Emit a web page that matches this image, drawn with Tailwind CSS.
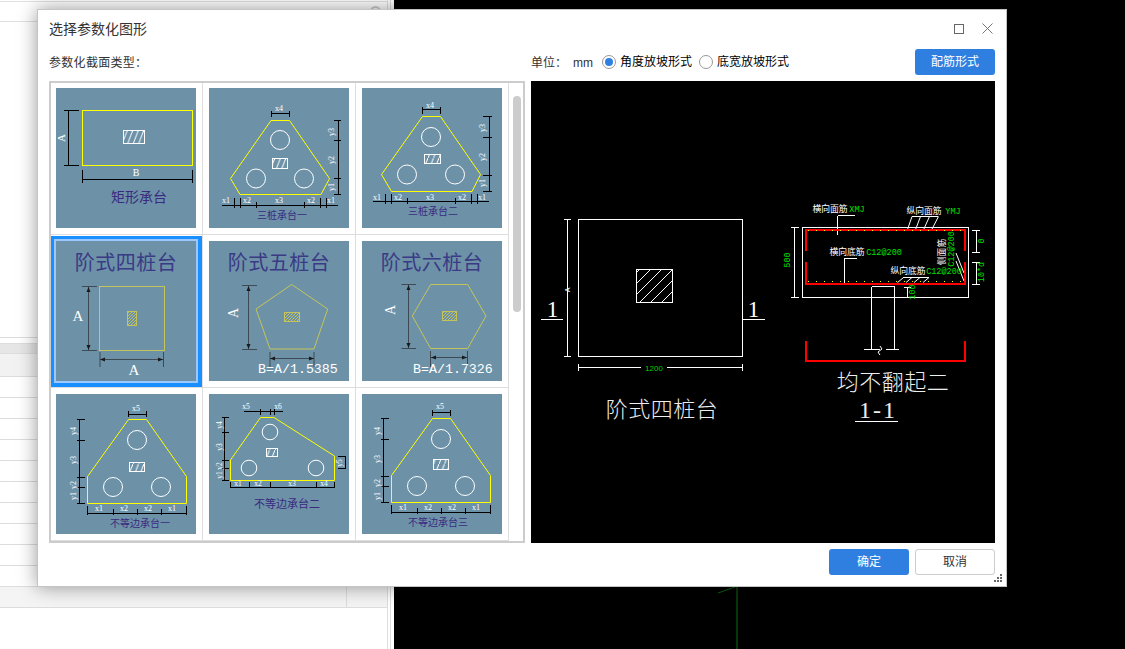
<!DOCTYPE html>
<html lang="zh">
<head>
  <meta charset="UTF-8"/>
  <title>选择参数化图形</title>
  <script src="https://cdn.jsdelivr.net/npm/@tailwindcss/browser@4"></script>
</head>
<body class="bg-black font-['Liberation_Sans','Noto_Sans_CJK_SC',sans-serif] text-[#333]">
<svg class="absolute w-0 h-0">
  <defs>
    <pattern id="hatch" width="5.5" height="14" patternUnits="userSpaceOnUse"><path d="M5.5 0L0 14" stroke="#fff" stroke-width="1"/></pattern>
    <pattern id="hatchSoft" width="3" height="3" patternUnits="userSpaceOnUse"><path d="M3 0L0 3" stroke="#c4c45a" stroke-width="0.9"/></pattern>
    <pattern id="hatchBig" width="11" height="11" patternUnits="userSpaceOnUse"><path d="M11 0L0 11" stroke="#fff" stroke-width="1"/></pattern>
  </defs>
</svg>

<div class="relative flex w-[1125px] h-[649px] overflow-hidden">
  <!-- 背景表格 -->
  <div class="w-[394px] h-full bg-white flex">
    <div class="w-[388px] border-r border-[#ddd] flex flex-col">
      <div class="h-[21px] mt-[1px] border-t border-b border-[#e0e0e0] flex justify-end items-center pr-[6px]"><div class="w-[11px] h-[11px] rounded-full border-2 border-[#ccc]"></div></div>
      <div class="h-[316px] border-b border-[#ddd]"></div>
      <div class="h-[5px]"></div>
      <div class="h-[11px] bg-[#e6e6e6] border-t border-[#ddd] border-b"></div>
      <div class="h-[23px] bg-[#f2f2f2] border-b border-[#ddd]"></div>
      <div class="h-[21px] border-b border-[#ddd]"></div>
      <div class="h-[21px] border-b border-[#ddd]"></div>
      <div class="h-[21px] border-b border-[#ddd]"></div>
      <div class="h-[21px] border-b border-[#ddd]"></div>
      <div class="h-[21px] border-b border-[#ddd]"></div>
      <div class="h-[21px] border-b border-[#ddd]"></div>
      <div class="h-[21px] border-b border-[#ddd]"></div>
      <div class="h-[21px] border-b border-[#ddd]"></div>
      <div class="h-[21px] border-b border-[#ddd]"></div>
      <div class="h-[21px] border-b border-[#ddd]"></div>
      <div class="h-[21px] border-b border-[#ddd] bg-[#f4f4f4] flex justify-end"><div class="w-[41px] border-l border-[#ddd]"></div></div>
    </div>
    <div class="w-[2px]"></div>
    <div class="w-[1px] bg-[#ddd]"></div>
  </div>
  <!-- 黑色绘图区 -->
  <div class="flex-1 bg-black relative">
    <svg class="absolute left-0 top-0" width="731" height="649" fill="none">
      <path d="M343 586V649" stroke="#0f6f0f"/>
      <path d="M324 593L341 587" stroke="#0f5f0f"/>
    </svg>
  </div>

  <!-- 对话框 -->
  <div class="absolute left-[37px] top-[9px] w-[970px] h-[578px] bg-white border border-[#c4c4c4] shadow-[0_0_18px_rgba(0,0,0,0.4)] px-[11px]">
    <div class="h-[39px] flex items-center justify-between">
      <div class="text-[14px] text-[#333] pb-[1px]">选择参数化图形</div>
      <div class="flex items-center gap-[18px] pr-[2px] pb-[2px]">
        <svg width="10" height="10" fill="none" stroke="#666"><rect x="0.5" y="0.5" width="9" height="9"/></svg>
        <svg width="11" height="11" fill="none" stroke="#777"><path d="M0.5 0.5L10.5 10.5M10.5 0.5L0.5 10.5"/></svg>
      </div>
    </div>

    <div class="h-[26px] flex items-center text-[12px]">
      <div class="w-[482px] tracking-[0.3px] pt-[2px]">参数化截面类型：</div>
      <div class="w-[42px] pt-[2px]">单位：</div>
      <div class="w-[29px] pt-[2px]">mm</div>
      <div class="w-[14px] h-[14px] rounded-full border border-[#999] flex items-center justify-center"><div class="w-[8px] h-[8px] rounded-full bg-[#2e7fe0]"></div></div>
      <div class="ml-[4px] w-[79px] text-black">角度放坡形式</div>
      <div class="w-[14px] h-[14px] rounded-full border border-[#999]"></div>
      <div class="ml-[4px] text-black">底宽放坡形式</div>
      <button class="ml-auto w-[80px] h-[26px] rounded-[3px] bg-[#2e7fe0] text-white text-[12px]">配筋形式</button>
    </div>

    <div class="flex mt-[6px]">
      <!-- 缩略图列表 -->
      <div class="relative w-[476px] h-[462px] border-2 border-[#ccc] overflow-hidden">
        <div class="grid grid-cols-[repeat(3,153px)] grid-rows-[repeat(3,153px)] ml-[-1px] mt-[-1px] w-[459px]">

          <div class="border-r border-b border-[#ddd] pl-[6px] pt-[6px]">
            <svg class="block bg-[#6d92a8]" width="140" height="140" fill="none" shape-rendering="crispEdges">
              <rect x="26.5" y="22.5" width="110" height="55" stroke="#ffff00"/>
              <rect x="67.5" y="42.5" width="21" height="13" fill="url(#hatch)" stroke="#fff"/>
              <g stroke="#000"><path d="M12.5 22.5V77.5M8 22.5H23M8 77.5H23M26.5 82V95M136.5 82V95M26.5 91.5H136.5"/></g>
              <g font-family="Liberation Serif" fill="#fff" text-anchor="middle" shape-rendering="auto">
                <text x="0" y="0" font-size="11" transform="translate(9 50) rotate(-90)">A</text>
                <text x="80" y="88" font-size="10">B</text>
              </g>
              <text x="83" y="114" font-size="14" fill="#3a2a80" text-anchor="middle">矩形承台</text>
            </svg>
          </div>

          <div class="border-r border-b border-[#ddd] pl-[6px] pt-[6px]">
            <svg class="block bg-[#6d92a8]" width="140" height="140" fill="none" shape-rendering="crispEdges">
              <path d="M62 32.5H80.5L120.5 90.5L112 106.5H31L21.5 90.5Z" stroke="#ffff00" shape-rendering="auto"/>
              <g stroke="#fff" shape-rendering="auto"><circle cx="71" cy="52" r="9.5"/><circle cx="47" cy="90.5" r="9.5"/><circle cx="95" cy="90.5" r="9.5"/></g>
              <rect x="63.5" y="70.5" width="15" height="10" fill="url(#hatch)" stroke="#fff"/>
              <path stroke="#000" d="M62.5 25.5H80.5M62.5 23V29M80.5 23V29M129.5 32.5V106.5M125 32.5H132M125 52.5H132M125 90.5H132M125 106.5H132M13 117.5H128.5M25.5 110V120M31.5 110V120M47.5 114V120M95.5 114V120M111.5 110V120M117.5 110V120"/>
              <g font-family="Liberation Serif" fill="#fff" font-size="8" text-anchor="middle" shape-rendering="auto">
                <text x="70" y="23">x4</text><text x="17" y="115">x1</text><text x="38" y="115">x2</text><text x="70" y="115">x3</text><text x="102" y="115">x2</text><text x="122" y="115">x1</text>
                <text transform="translate(125 44) rotate(-90)">y3</text><text transform="translate(125 72) rotate(-90)">y2</text><text transform="translate(125 99) rotate(-90)">y1</text>
              </g>
              <text x="73" y="131" font-size="10" fill="#3a2a80" text-anchor="middle">三桩承台一</text>
            </svg>
          </div>

          <div class="border-r border-b border-[#ddd] pl-[6px] pt-[6px]">
            <svg class="block bg-[#6d92a8]" width="140" height="140" fill="none" shape-rendering="crispEdges">
              <path d="M60.5 28.5H78.5L118.5 86.5L110 103.5H29.5L19.5 86.5Z" stroke="#ffff00" shape-rendering="auto"/>
              <g stroke="#fff" shape-rendering="auto"><circle cx="69" cy="49" r="9.5"/><circle cx="45" cy="86.5" r="9.5"/><circle cx="93" cy="86.5" r="9.5"/></g>
              <rect x="62.5" y="66.5" width="16" height="9" fill="url(#hatch)" stroke="#fff"/>
              <path stroke="#000" d="M60.5 21.5H78.5M60.5 19V26M78.5 19V26M127.5 28.5V103.5M121 28.5H130M121 49.5H130M121 87.5H130M121 103.5H130M11 113.5H126.5M23.5 106V116M29.5 106V116M45.5 110V116M93.5 110V116M109.5 106V116M115.5 106V116"/>
              <g font-family="Liberation Serif" fill="#fff" font-size="8" text-anchor="middle" shape-rendering="auto">
                <text x="68" y="20">x4</text><text x="15" y="112">x1</text><text x="36" y="112">x2</text><text x="68" y="112">x3</text><text x="100" y="112">x2</text><text x="120" y="112">x1</text>
                <text transform="translate(123 40) rotate(-90)">y3</text><text transform="translate(123 69) rotate(-90)">y2</text><text transform="translate(123 95) rotate(-90)">y1</text>
              </g>
              <text x="71" y="127" font-size="10" fill="#3a2a80" text-anchor="middle">三桩承台二</text>
            </svg>
          </div>

          <div class="border-r border-b border-[#ddd] pl-[6px] pt-[6px]">
            <svg class="block bg-[#6d92a8] shadow-[0_0_0_2px_#9cc8ff,0.5px_0.5px_0_5.5px_#1a8fff]" width="140" height="140" fill="none">
              <text x="70" y="29" font-size="20" letter-spacing="0.5" fill="#3a3a85" text-anchor="middle">阶式四桩台</text>
              <rect x="43.5" y="45.5" width="65" height="64" stroke="#c4c45a"/>
              <rect x="71.5" y="70.5" width="9" height="14" fill="url(#hatchSoft)" stroke="#c4c45a"/>
              <path stroke="#3d4a55" d="M32.5 46V109M26 45.5H41M26 109.5H41M44 111V126M107.5 111V126M44 118.5H107"/>
              <path fill="#1a1a1a" d="M32.5 46L30.5 51H34.5ZM32.5 109L30.5 104H34.5ZM44 118.5L49 116.5V120.5ZM107 118.5L102 116.5V120.5Z"/>
              <g font-family="Liberation Serif" fill="#fff" font-size="15" text-anchor="middle"><text x="22" y="80">A</text><text x="78" y="134">A</text></g>
            </svg>
          </div>

          <div class="border-r border-b border-[#ddd] pl-[6px] pt-[6px]">
            <svg class="block bg-[#6d92a8]" width="140" height="140" fill="none">
              <text x="70" y="29" font-size="20" letter-spacing="0.5" fill="#3a3a85" text-anchor="middle">阶式五桩台</text>
              <path d="M82.7 43.5L118.7 68L105 108H61L47 68Z" stroke="#c4c45a"/>
              <rect x="75.5" y="71.5" width="15" height="9" fill="url(#hatchSoft)" stroke="#c4c45a"/>
              <path stroke="#3d4a55" d="M39.5 45V108M33 44.5H48M33 108.5H48M61 111V126M105 111V126M61 117.5H105"/>
              <path fill="#1a1a1a" d="M39.5 45L37.5 50H41.5ZM39.5 108L37.5 103H41.5ZM61 117.5L66 115.5V119.5ZM105 117.5L100 115.5V119.5Z"/>
              <text font-family="Liberation Serif" fill="#fff" font-size="14" text-anchor="middle" transform="translate(29 72) rotate(-90)">A</text>
              <text x="49" y="132" font-family="Liberation Mono" fill="#fff" font-size="13.3">B=A/1.5385</text>
            </svg>
          </div>

          <div class="border-r border-b border-[#ddd] pl-[6px] pt-[6px]">
            <svg class="block bg-[#6d92a8]" width="140" height="140" fill="none">
              <text x="70" y="29" font-size="20" letter-spacing="0.5" fill="#3a3a85" text-anchor="middle">阶式六桩台</text>
              <path d="M68.7 43.5H105.7L124 75L105.7 107.5H68.7L50.3 75Z" stroke="#c4c45a"/>
              <rect x="80.5" y="70.5" width="14" height="9" fill="url(#hatchSoft)" stroke="#c4c45a"/>
              <path stroke="#3d4a55" d="M46.5 44V107M39.5 43.5H54M39.5 107.5H54M68.5 110V126M105.5 110V126M69 116.5H105"/>
              <path fill="#1a1a1a" d="M46.5 44L44.5 49H48.5ZM46.5 107L44.5 102H48.5ZM69 116.5L74 114.5V118.5ZM105 116.5L100 114.5V118.5Z"/>
              <text font-family="Liberation Serif" fill="#fff" font-size="14" text-anchor="middle" transform="translate(33 69) rotate(-90)">A</text>
              <text x="51" y="132" font-family="Liberation Mono" fill="#fff" font-size="13.3">B=A/1.7326</text>
            </svg>
          </div>

          <div class="border-r border-b border-[#ddd] pl-[6px] pt-[6px]">
            <svg class="block bg-[#6d92a8]" width="140" height="140" fill="none" shape-rendering="crispEdges">
              <path d="M72.5 25.5H90.5L130.5 82.5V109.5H31.5V82.5Z" stroke="#ffff00" shape-rendering="auto"/>
              <g stroke="#fff" shape-rendering="auto"><circle cx="81" cy="46" r="9.5"/><circle cx="57" cy="93" r="9.5"/><circle cx="105" cy="93" r="9.5"/></g>
              <rect x="73.5" y="68.5" width="15" height="9" fill="url(#hatch)" stroke="#fff"/>
              <path stroke="#000" d="M72.5 20.5H90.5M72.5 17V23M90.5 17V23M23.5 25.5V109.5M21 25.5H29M21 46.5H29M21 83.5H29M21 93.5H29M21 109.5H29M31.5 119.5H130.5M31.5 112V121M57.5 115V121M81.5 115V121M105.5 115V121M130.5 112V121"/>
              <g font-family="Liberation Serif" fill="#fff" font-size="8" text-anchor="middle" shape-rendering="auto">
                <text x="80" y="17">x5</text><text x="43" y="117">x1</text><text x="68" y="117">x2</text><text x="92" y="117">x2</text><text x="116" y="117">x1</text>
                <text transform="translate(20 37) rotate(-90)">y4</text><text transform="translate(20 66) rotate(-90)">y3</text><text transform="translate(20 91) rotate(-90)">y2</text><text transform="translate(20 102) rotate(-90)">y1</text>
              </g>
              <text x="84" y="133" font-size="10" fill="#3a2a80" text-anchor="middle">不等边承台一</text>
            </svg>
          </div>

          <div class="border-r border-b border-[#ddd] pl-[6px] pt-[6px]">
            <svg class="block bg-[#6d92a8]" width="140" height="140" fill="none" shape-rendering="crispEdges">
              <path d="M51.5 23.5H65L125.5 62V86.5H21.5V66Z" stroke="#ffff00" shape-rendering="auto"/>
              <g stroke="#fff" shape-rendering="auto"><circle cx="61" cy="38" r="7.8"/><circle cx="40" cy="74" r="7.8"/><circle cx="107" cy="74" r="7.8"/></g>
              <rect x="57.5" y="54.5" width="11" height="8" fill="url(#hatch)" stroke="#fff"/>
              <path stroke="#000" d="M34.5 17.5H73.5M51.5 15V21M61.5 15V21M65.5 15V21M15.5 23.5V86.5M13 23.5H20M13 38.5H20M13 66.5H20M13 74.5H20M13 86.5H20M136.5 62.5V74.5M129 62.5H137M129 74.5H137M21.5 93.5H125.5M21.5 88V94M40.5 88V94M61.5 88V94M107.5 88V94M125.5 88V94"/>
              <g font-family="Liberation Serif" fill="#fff" font-size="7.5" text-anchor="middle" shape-rendering="auto">
                <text x="37" y="15">x5</text><text x="69" y="15">x6</text><text x="29" y="92">x1</text><text x="49" y="92">x2</text><text x="83" y="92">x3</text><text x="115" y="92">x4</text>
                <text transform="translate(13 31) rotate(-90)">y4</text><text transform="translate(13 53) rotate(-90)">y3</text><text transform="translate(13 72) rotate(-90)">y2</text><text transform="translate(13 81) rotate(-90)">y1</text><text transform="translate(133 69) rotate(-90)">y5</text>
              </g>
              <text x="78" y="114" font-size="11" fill="#3a2a80" text-anchor="middle">不等边承台二</text>
            </svg>
          </div>

          <div class="border-r border-b border-[#ddd] pl-[6px] pt-[6px]">
            <svg class="block bg-[#6d92a8]" width="140" height="140" fill="none" shape-rendering="crispEdges">
              <path d="M70.5 24.5H88.5L128.5 81.5V108.5H29.5V81.5Z" stroke="#ffff00" shape-rendering="auto"/>
              <g stroke="#fff" shape-rendering="auto"><circle cx="79" cy="45" r="9.5"/><circle cx="55" cy="92" r="9.5"/><circle cx="103" cy="92" r="9.5"/></g>
              <rect x="71.5" y="65.5" width="15" height="10" fill="url(#hatch)" stroke="#fff"/>
              <path stroke="#000" d="M70.5 18.5H88.5M70.5 16V22M88.5 16V22M21.5 24.5V108.5M19 24.5H27M19 45.5H27M19 82.5H27M19 92.5H27M19 108.5H27M29.5 118.5H128.5M29.5 111V120M55.5 114V120M79.5 114V120M103.5 114V120M128.5 111V120"/>
              <g font-family="Liberation Serif" fill="#fff" font-size="8" text-anchor="middle" shape-rendering="auto">
                <text x="78" y="15">x5</text><text x="41" y="116">x1</text><text x="66" y="116">x2</text><text x="90" y="116">x2</text><text x="114" y="116">x1</text>
                <text transform="translate(18 37) rotate(-90)">y4</text><text transform="translate(18 65) rotate(-90)">y3</text><text transform="translate(18 89) rotate(-90)">y2</text><text transform="translate(18 102) rotate(-90)">y1</text>
              </g>
              <text x="76" y="132" font-size="10" fill="#3a2a80" text-anchor="middle">不等边承台三</text>
            </svg>
          </div>
        </div>
        <!-- 滚动条 -->
        <div class="absolute left-[462px] top-[13px] w-[8px] h-[216px] rounded-[4px] bg-[#ccc]"></div>
      </div>

      <!-- 预览 -->
      <div class="ml-[6px] w-[464px] h-[462px] bg-black">
        <svg class="block" width="464" height="462" fill="none" shape-rendering="crispEdges">
          <rect x="47.5" y="138.5" width="164" height="137" stroke="#fff"/>
          <rect x="105.5" y="188.5" width="36" height="33" stroke="#fff" fill="url(#hatchBig)"/>
          <path stroke="#fff" d="M36.500 138V275M33 138.500H40M33 275.500H40M47.500 283V290M211.500 283V290M47 286.500H110M136 286.500H211M10 238.500H32M212 238.500H234"/>
          <g shape-rendering="auto">
            <text x="36.5" y="209" font-family="Liberation Sans" font-size="7" fill="#fff" text-anchor="middle" transform="rotate(-90 36.5 209)" dy="2.5">A</text>
            <text x="123" y="290" font-family="Liberation Sans" font-size="8" fill="#00d000" text-anchor="middle">1200</text>
            <text x="21.5" y="236" font-family="Liberation Serif" font-size="23" fill="#fff" text-anchor="middle">1</text>
            <text x="222.5" y="236" font-family="Liberation Serif" font-size="23" fill="#fff" text-anchor="middle">1</text>
            <text x="131" y="336" font-size="22" letter-spacing="0.5" font-weight="300" fill="#eee" text-anchor="middle">阶式四桩台</text>
          </g>

          <rect x="271.5" y="146.5" width="166" height="70" stroke="#fff"/>
          <path stroke="#fff" d="M263.500 146V216M260 146.500H268M260 216.500H268M306.500 135V154M306.500 134.500H324M313.500 177V204M313.500 177.500H326M381 135.500H407M445.500 149V171M441 149.500H449M441 171.500H449M445.500 181V203M441 181.500H449M441 203.500H449M376.500 206V217M373 206.500H380M340.500 206V268M363.500 206V268M340.500 205.500H363.500M333 268.500H349M355 268.500H368M324 340.500H367"/>
          <g stroke="#fff" shape-rendering="auto"><path d="M381 135.500L376 150M389.500 135.500L384 150M398.500 135.500L392 150M407.500 135.500L400 150M372.500 196.500L366.500 201.500M381 196.500L375 201.500M389 196.500L383 201.500M398 196.500L392 201.500M425 172L433 192M425 180L433 200M349 265L351 268L347 271L349 274"/><path d="M372 196.500H398"/></g>
          <path stroke="#f00" stroke-width="2" d="M275 170V148.500H433.500V170M275 181V203H433.500V181M275 260V280H433.500V260"/>
          <path stroke="#ffff00" stroke-dasharray="1 7" d="M277 149.500H432M277 200.500H432"/>
          <g shape-rendering="auto" font-size="8.800" fill="#fff" text-anchor="middle">
            <text x="299" y="131">横向面筋</text><text x="393" y="133">纵向面筋</text><text x="316" y="174">横向底筋</text><text x="377" y="193">纵向底筋</text>
            <text transform="translate(414 171) rotate(-90)">侧面筋</text>
          </g>
          <g shape-rendering="auto" font-family="Liberation Mono" font-size="8.500" fill="#00e000" text-anchor="middle">
            <text x="326" y="131">XMJ</text><text x="422" y="133">YMJ</text><text x="353" y="174">C12@200</text><text x="413" y="193">C12@200</text>
            <text transform="translate(423 168) rotate(-90)">C12@200</text><text transform="translate(259 179) rotate(-90)">500</text><text transform="translate(453 160) rotate(-90)">0</text><text transform="translate(453 191) rotate(-90)">10*d</text><text transform="translate(384 211) rotate(-90)">100</text>
          </g>
          <g shape-rendering="auto" fill="#eee" text-anchor="middle">
            <text x="362" y="309" font-size="22" letter-spacing="0.5" font-weight="300">均不翻起二</text>
            <text x="347" y="337" font-size="24" letter-spacing="2" font-family="Liberation Serif">1-1</text>
          </g>
        </svg>
      </div>
    </div>

    <div class="flex justify-end gap-[6px] mt-[6px]">
      <button class="w-[80px] h-[26px] rounded-[3px] bg-[#2e7fe0] text-white text-[12px]">确定</button>
      <button class="w-[80px] h-[26px] rounded-[3px] bg-white border border-[#ccc] text-[#333] text-[12px]">取消</button>
    </div>

    <!-- 调整大小手柄 -->
    <svg class="absolute right-[3px] bottom-[3px]" width="9" height="9" fill="#666"><rect x="6" width="2" height="2"/><rect x="3" y="3" width="2" height="2"/><rect x="6" y="3" width="2" height="2"/><rect y="6" width="2" height="2"/><rect x="3" y="6" width="2" height="2"/><rect x="6" y="6" width="2" height="2"/></svg>
  </div>
</div>
</body>
</html>
